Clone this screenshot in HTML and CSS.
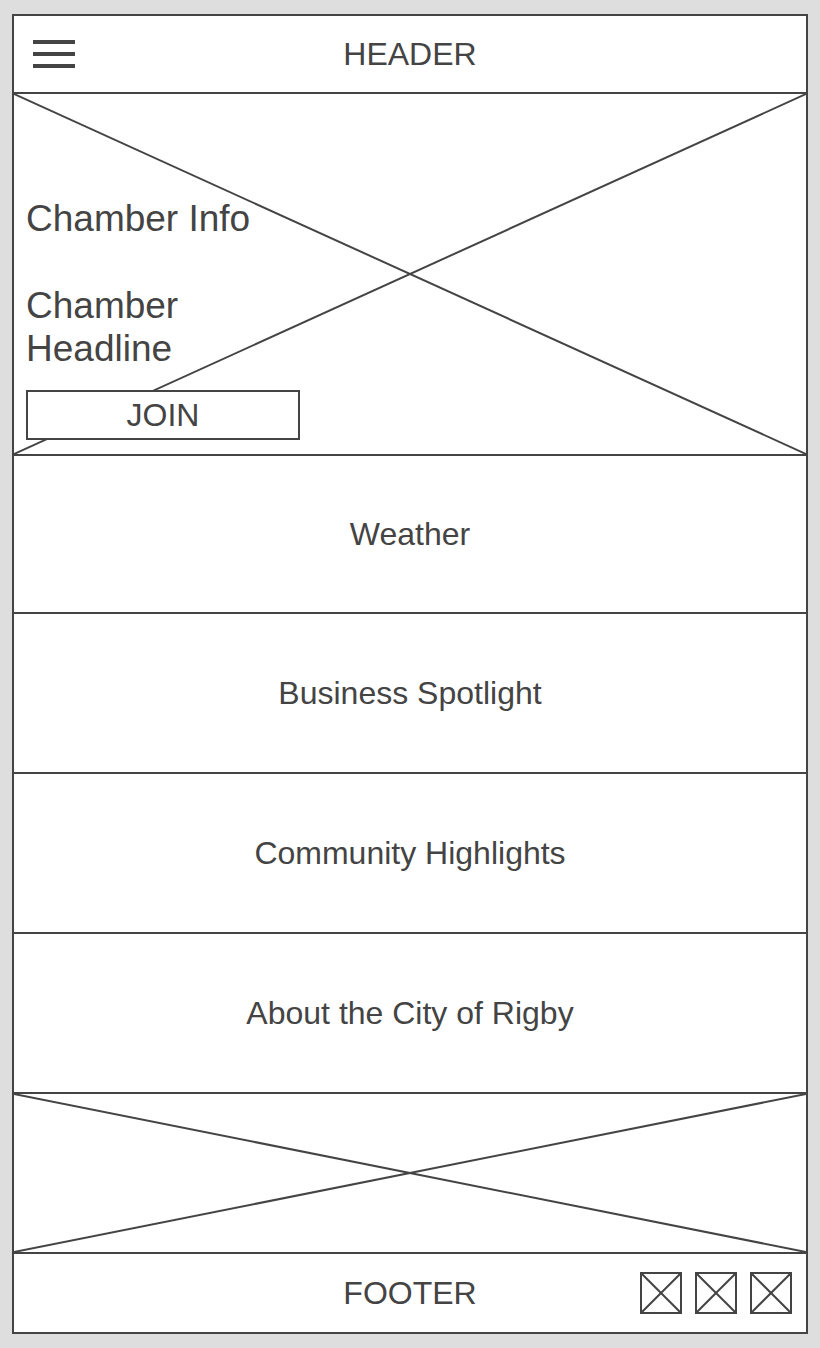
FILE: index.html
```html
<!DOCTYPE html>
<html lang="en">
<head>
    <meta charset="UTF-8">
    <meta name="viewport" content="width=device-width, initial-scale=1.0">
    <title>Rigby Chamber - Wireframe</title>
    <link rel="stylesheet" href="styles.css">
</head>
<body>
    <div class="frame">
        <header class="header">
            <div class="menu-icon">
                <span></span>
                <span></span>
                <span></span>
            </div>
            <div class="header-title">HEADER</div>
            <div></div>
        </header>

        <section class="hero">
            <svg class="placeholder" viewBox="0 0 100 100" preserveAspectRatio="none">
                <line x1="0" y1="0" x2="100" y2="100" />
                <line x1="100" y1="0" x2="0" y2="100" />
            </svg>
            <div class="hero-content">
                <p class="hero-info">Chamber Info</p>
                <p class="hero-headline">Chamber Headline</p>
                <button class="join-btn">JOIN</button>
            </div>
        </section>

        <section class="block block-first">Weather</section>
        <section class="block">Business Spotlight</section>
        <section class="block">Community Highlights</section>
        <section class="block">About the City of Rigby</section>

        <section class="image-block">
            <svg class="placeholder" viewBox="0 0 100 100" preserveAspectRatio="none">
                <line x1="0" y1="0" x2="100" y2="100" />
                <line x1="100" y1="0" x2="0" y2="100" />
            </svg>
        </section>

        <footer class="footer">
            <div></div>
            <div class="footer-title">FOOTER</div>
            <div class="social">
                <div class="social-icon">
                    <svg viewBox="0 0 100 100" preserveAspectRatio="none">
                        <line x1="0" y1="0" x2="100" y2="100" />
                        <line x1="100" y1="0" x2="0" y2="100" />
                    </svg>
                </div>
                <div class="social-icon">
                    <svg viewBox="0 0 100 100" preserveAspectRatio="none">
                        <line x1="0" y1="0" x2="100" y2="100" />
                        <line x1="100" y1="0" x2="0" y2="100" />
                    </svg>
                </div>
                <div class="social-icon">
                    <svg viewBox="0 0 100 100" preserveAspectRatio="none">
                        <line x1="0" y1="0" x2="100" y2="100" />
                        <line x1="100" y1="0" x2="0" y2="100" />
                    </svg>
                </div>
            </div>
        </footer>
    </div>
</body>
</html>
```

FILE: styles.css
```css
body {
    margin: 0;
    padding: 14px 12px;
    background-color: #dedede;
    font-family: "Liberation Sans", Arial, sans-serif;
    color: #444;
}
.frame {
    width: 792px;
    border: 2px solid #444;
    background-color: white;
}
.header {
    height: 76px;
    display: grid;
    grid-template-columns: 1fr auto 1fr;
    align-items: center;
    padding: 0 19px;
    border-bottom: 2px solid #444;
    font-size: 32px;
}
.menu-icon {
    display: flex;
    flex-direction: column;
    gap: 8px;
    width: 42px;
}
.menu-icon span {
    display: block;
    height: 4px;
    background-color: #444;
}
.header-title {
    text-align: center;
}
.hero {
    position: relative;
    height: 362px;
    box-sizing: border-box;
    border-bottom: 2px solid #444;
    display: flex;
    flex-direction: column;
    justify-content: flex-end;
    padding: 0 12px 14px;
}
.placeholder {
    position: absolute;
    top: 0;
    left: 0;
    width: 100%;
    height: 100%;
}
.placeholder line, .social-icon line {
    stroke: #444;
    stroke-width: 2;
    vector-effect: non-scaling-stroke;
}
.hero-content {
    position: relative;
    width: 274px;
}
.hero-content p {
    margin: 0;
    font-size: 37px;
    line-height: 43px;
}
.hero-content .hero-info {
    margin-bottom: 44px;
}
.join-btn {
    display: block;
    width: 274px;
    height: 50px;
    margin-top: 20px;
    padding: 0;
    border: 2px solid #444;
    background-color: white;
    color: #444;
    font-family: "Liberation Sans", Arial, sans-serif;
    font-size: 32px;
}
.block {
    height: 158px;
    display: flex;
    align-items: center;
    justify-content: center;
    border-bottom: 2px solid #444;
    font-size: 32px;
}
.block-first {
    height: 156px;
}
.image-block {
    position: relative;
    height: 158px;
    border-bottom: 2px solid #444;
}
.footer {
    height: 78px;
    display: grid;
    grid-template-columns: 1fr auto 1fr;
    align-items: center;
    padding: 0 14px;
    font-size: 32px;
}
.footer-title {
    text-align: center;
}
.social {
    display: flex;
    justify-content: flex-end;
    gap: 13px;
}
.social-icon {
    width: 38px;
    height: 38px;
    border: 2px solid #444;
}
.social-icon svg {
    display: block;
    width: 100%;
    height: 100%;
}
```
